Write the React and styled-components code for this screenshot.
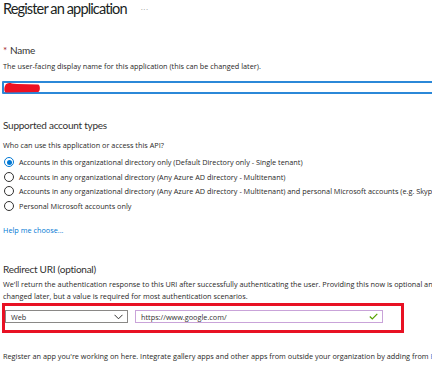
import styled, { createGlobalStyle } from 'styled-components';

const GlobalStyle = createGlobalStyle`
  body {
    margin: 0;
    background: #fff;
    overflow: hidden;
    font-family: "Open Sans", "Noto Sans", sans-serif;
    color: #323130;
  }
`;

const Page = styled.div`
  width: 432px;
  height: 366px;
  overflow: hidden;
  padding-left: 3px;
  box-sizing: border-box;
  white-space: nowrap;
`;

const Header = styled.div`
  display: flex;
  align-items: center;
  gap: 14px;
  height: 18px;
`;

const Title = styled.h1`
  margin: 0;
  font-family: Lato, "Open Sans", sans-serif;
  font-size: 14.6px;
  letter-spacing: -0.9px;
  line-height: 18px;
  font-weight: 400;
  color: #201f1e;
`;

const More = styled.span`
  font-size: 8px;
  color: #8a8886;
  letter-spacing: 0.5px;
  margin-top: -2px;
`;

const Label = styled.div`
  margin-top: ${p => p.$top}px;
  font-family: Lato, "Open Sans", sans-serif;
  font-size: 10px;
  letter-spacing: -0.25px;
  line-height: 14px;
  color: #323130;

  .req {
    color: #a4262c;
    margin-right: 3px;
  }
`;

const Hint = styled.div`
  margin-top: ${p => p.$top}px;
  font-size: 7.3px;
  line-height: ${p => p.$lh || 10}px;
  color: #292827;
`;

const NameInput = styled.div`
  position: relative;
  margin-top: 10px;
  margin-left: -1px;
  width: 460px;
  height: 13px;
  border: 2px solid #2b88d8;
  border-radius: 1px;
  box-sizing: border-box;

  svg {
    position: absolute;
    left: 0;
    top: -1px;
  }
`;

const RadioList = styled.div`
  margin-top: 5px;
  display: flex;
  flex-direction: column;
`;

const RadioRow = styled.label`
  display: flex;
  align-items: center;
  height: 14.6px;
  font-size: 7.3px;
  color: #292827;
`;

const Circle = styled.span`
  flex-shrink: 0;
  width: 10px;
  height: 10px;
  margin-left: 1px;
  margin-right: 5px;
  border-radius: 50%;
  border: 1px solid ${p => (p.$checked ? '#0078d4' : '#323130')};
  box-sizing: border-box;
  display: flex;
  align-items: center;
  justify-content: center;

  &::after {
    content: '';
    width: 5px;
    height: 5px;
    border-radius: 50%;
    background: ${p => (p.$checked ? '#0078d4' : 'transparent')};
  }
`;

const Link = styled.span`
  color: #0078d4;
`;

const Highlight = styled.div`
  margin-top: 1px;
  margin-left: -1px;
  width: 402px;
  height: 30px;
  border: 3px solid #e81123;
  box-sizing: border-box;
  display: flex;
  gap: 7px;
  padding-top: 4px;
`;

const Select = styled.div`
  width: 123px;
  height: 13px;
  border: 1px solid #8a8886;
  box-sizing: border-box;
  display: flex;
  align-items: center;
  justify-content: space-between;
  padding: 0 4px 0 5px;
  font-size: 7.3px;
  color: #323130;
`;

const UriInput = styled.div`
  width: 248px;
  height: 13px;
  border: 1.5px solid #c9a3d9;
  box-sizing: border-box;
  display: flex;
  align-items: center;
  justify-content: space-between;
  padding: 0 4px 0 5px;
  font-size: 7.3px;
  color: #323130;
`;

const accounts = [
  { text: 'Accounts in this organizational directory only (Default Directory only - Single tenant)', checked: true },
  { text: 'Accounts in any organizational directory (Any Azure AD directory - Multitenant)' },
  { text: 'Accounts in any organizational directory (Any Azure AD directory - Multitenant) and personal Microsoft accounts (e.g. Skype, Xbox)' },
  { text: 'Personal Microsoft accounts only' },
];

function App() {
  return (
    <Page>
      <GlobalStyle />
      <Header>
        <Title>Register an application</Title>
        <More>···</More>
      </Header>

      <Label $top={25}><span className="req">*</span>Name</Label>
      <Hint $top={4}>The user-facing display name for this application (this can be changed later).</Hint>
      <NameInput>
        <svg width="40" height="13" viewBox="0 0 40 13">
          <path d="M1 4 C2 1 5 0.5 8 1.5 L13 2 L34 2.5 C36.5 2.5 36.5 10 34 10 L2 10.5 C0 10.5 0 6 1 4 Z" fill="#ee1122" />
        </svg>
      </NameInput>

      <Label $top={24}>Supported account types</Label>
      <Hint $top={8}>Who can use this application or access this API?</Hint>
      <RadioList>
        {accounts.map(a => (
          <RadioRow key={a.text}>
            <Circle $checked={a.checked} />
            {a.text}
          </RadioRow>
        ))}
      </RadioList>
      <Hint $top={12}><Link>Help me choose...</Link></Hint>

      <Label $top={27}>Redirect URI (optional)</Label>
      <Hint $top={2} $lh={12}>
        We'll return the authentication response to this URI after successfully authenticating the user. Providing this now is optional and it can be
        <br />
        changed later, but a value is required for most authentication scenarios.
      </Hint>
      <Highlight>
        <Select>
          Web
          <svg width="9" height="6" viewBox="0 0 9 6">
            <path d="M0.5 0.8 L4.5 4.8 L8.5 0.8" fill="none" stroke="#323130" strokeWidth="1" />
          </svg>
        </Select>
        <UriInput>
          https://www.google.com/
          <svg width="9" height="7" viewBox="0 0 9 7">
            <path d="M0.8 3.5 L3.3 6 L8.3 0.8" fill="none" stroke="#57a300" strokeWidth="1.2" />
          </svg>
        </UriInput>
      </Highlight>

      <Hint $top={18}>
        Register an app you're working on here. Integrate gallery apps and other apps from outside your organization by adding from <Link>Enterprise applications</Link>.
      </Hint>
    </Page>
  );
}

export default App;
